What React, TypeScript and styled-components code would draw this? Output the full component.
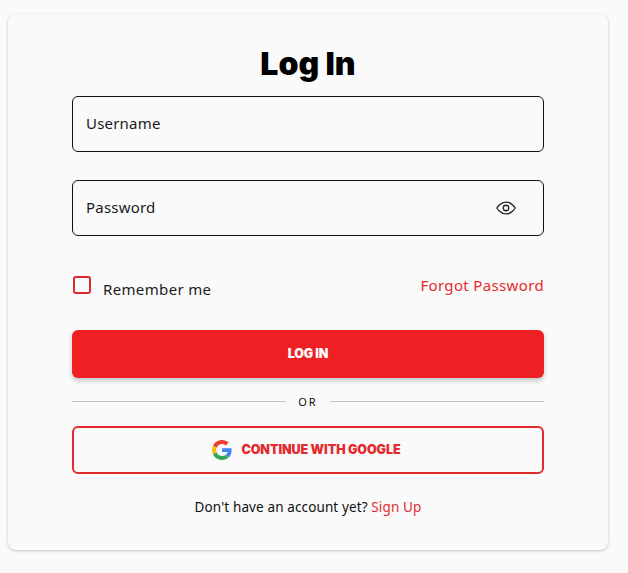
import React from "react";
import styled, { createGlobalStyle } from "styled-components";

const Global = createGlobalStyle`
  html, body { margin: 0; padding: 0; background: #fafafa; }
  body { font-family: "Noto Sans", "Open Sans", sans-serif; color: #111; }
  * { box-sizing: border-box; }
`;

const Page = styled.div`
  width: 628px;
  height: 573px;
  padding: 14px 20px 23px 8px;
`;

const Card = styled.form`
  width: 600px;
  height: 536px;
  padding: 26px 64px 0;
  background: #fafafa;
  border-radius: 8px;
  box-shadow: 0 1px 3px rgba(0, 0, 0, 0.22), 0 0 1px rgba(0, 0, 0, 0.08);
  display: flex;
  flex-direction: column;
`;

const Title = styled.h1`
  margin: 0 0 10px;
  height: 46px;
  padding-top: 1px;
  font-family: Inter, "Noto Sans", sans-serif;
  font-size: 32px;
  line-height: 46px;
  font-weight: 900;
  text-align: center;
  color: #000;
`;

const Field = styled.div`
  height: 56px;
  border: 1px solid #111;
  border-radius: 6px;
  padding: 0 26px 2px 13px;
  display: flex;
  align-items: center;
  justify-content: space-between;
  margin-bottom: 28px;
  font-size: 15px;
  font-weight: 450;
  letter-spacing: 0.2px;
  color: #1a1a1a;
`;

const EyeButton = styled.span`
  display: flex;
  color: #222;
  margin-top: 2px;
`;

const Options = styled.div`
  display: flex;
  align-items: flex-start;
  justify-content: space-between;
  height: 66px;
  padding-top: 12px;
`;

const Remember = styled.label`
  display: flex;
  align-items: flex-start;
  gap: 12px;
  font-size: 15px;
  font-weight: 450;
  letter-spacing: 0.35px;
  color: #1a1a1a;
  padding-left: 1px;
`;

const Box = styled.span`
  width: 18px;
  height: 18px;
  border: 2px solid #dc2a2f;
  border-radius: 3px;
`;

const RememberText = styled.span`
  margin-top: 3px;
  line-height: 20px;
`;

const Forgot = styled.a`
  color: #e32a2e;
  font-size: 15px;
  font-weight: 450;
  line-height: 18px;
  letter-spacing: 0.35px;
`;

const Primary = styled.button`
  height: 48px;
  border: 0;
  border-radius: 6px;
  padding: 0 0 2px;
  background: #ef2024;
  color: #fff;
  font: 900 12.5px Inter, "Noto Sans", sans-serif;
  letter-spacing: -0.2px;
  box-shadow: 0 3px 5px rgba(0, 0, 0, 0.2);
`;

const Divider = styled.div`
  height: 46px;
  margin-bottom: 2px;
  display: flex;
  align-items: center;
  gap: 12px;
  font-size: 11px;
  letter-spacing: 2px;
  font-weight: 450;
`;

const Line = styled.span`
  flex: 1;
  height: 1px;
  background: #c4c4c4;
`;

const Google = styled.button`
  height: 48px;
  border: 2px solid #e32a2e;
  border-radius: 6px;
  padding: 0 3px 1px 0;
  background: transparent;
  color: #e32a2e;
  font: 900 12.5px Inter, "Noto Sans", sans-serif;
  letter-spacing: -0.05px;
  display: flex;
  align-items: center;
  justify-content: center;
  gap: 9px;
`;

const Footer = styled.p`
  margin: 23px 0 0;
  font-size: 13.5px;
  font-weight: 450;
  line-height: 20px;
  letter-spacing: 0.12px;
  text-align: center;
  color: #111;
`;

const SignUp = styled.a`
  color: #e32a2e;
`;

export default function App() {
  return (
    <>
      <Global />
      <Page>
        <Card>
          <Title>Log In</Title>
          <Field>Username</Field>
          <Field>
            Password
            <EyeButton>
              <svg width="22" height="22" viewBox="0 0 24 24" fill="none" stroke="currentColor" strokeWidth="1.4">
                <path d="M2 12s3.800-6.500 10-6.500S22 12 22 12s-3.800 6.500-10 6.500S2 12 2 12Z" />
                <circle cx="12" cy="12" r="3" />
              </svg>
            </EyeButton>
          </Field>
          <Options>
            <Remember>
              <Box />
              <RememberText>Remember me</RememberText>
            </Remember>
            <Forgot>Forgot Password</Forgot>
          </Options>
          <Primary type="button">LOG IN</Primary>
          <Divider>
            <Line />
            OR
            <Line />
          </Divider>
          <Google type="button">
            <svg width="20" height="20" viewBox="0 0 48 48">
              <path fill="#EA4335" d="M24 9.500c3.500 0 6.700 1.200 9.200 3.600l6.900-6.900C35.900 2.400 30.500 0 24 0 14.600 0 6.500 5.400 2.600 13.200l8 6.200C12.500 13.700 17.800 9.500 24 9.500z" />
              <path fill="#4285F4" d="M47 24.500c0-1.600-.1-3.100-.4-4.500H24v9h12.900c-.6 3-2.200 5.500-4.700 7.200l7.700 6C44.400 38 47 31.800 47 24.500z" />
              <path fill="#FBBC05" d="M10.600 28.600c-.5-1.400-.8-3-.8-4.600s.3-3.200.8-4.600l-8-6.200C.9 16.500 0 20.100 0 24s.9 7.500 2.600 10.800l8-6.200z" />
              <path fill="#34A853" d="M24 48c6.500 0 11.900-2.100 15.900-5.800l-7.700-6c-2.200 1.500-4.900 2.300-8.200 2.300-6.200 0-11.500-4.200-13.400-9.900l-8 6.200C6.500 42.600 14.600 48 24 48z" />
            </svg>
            CONTINUE WITH GOOGLE
          </Google>
          <Footer>
            Don't have an account yet? <SignUp>Sign Up</SignUp>
          </Footer>
        </Card>
      </Page>
    </>
  );
}
